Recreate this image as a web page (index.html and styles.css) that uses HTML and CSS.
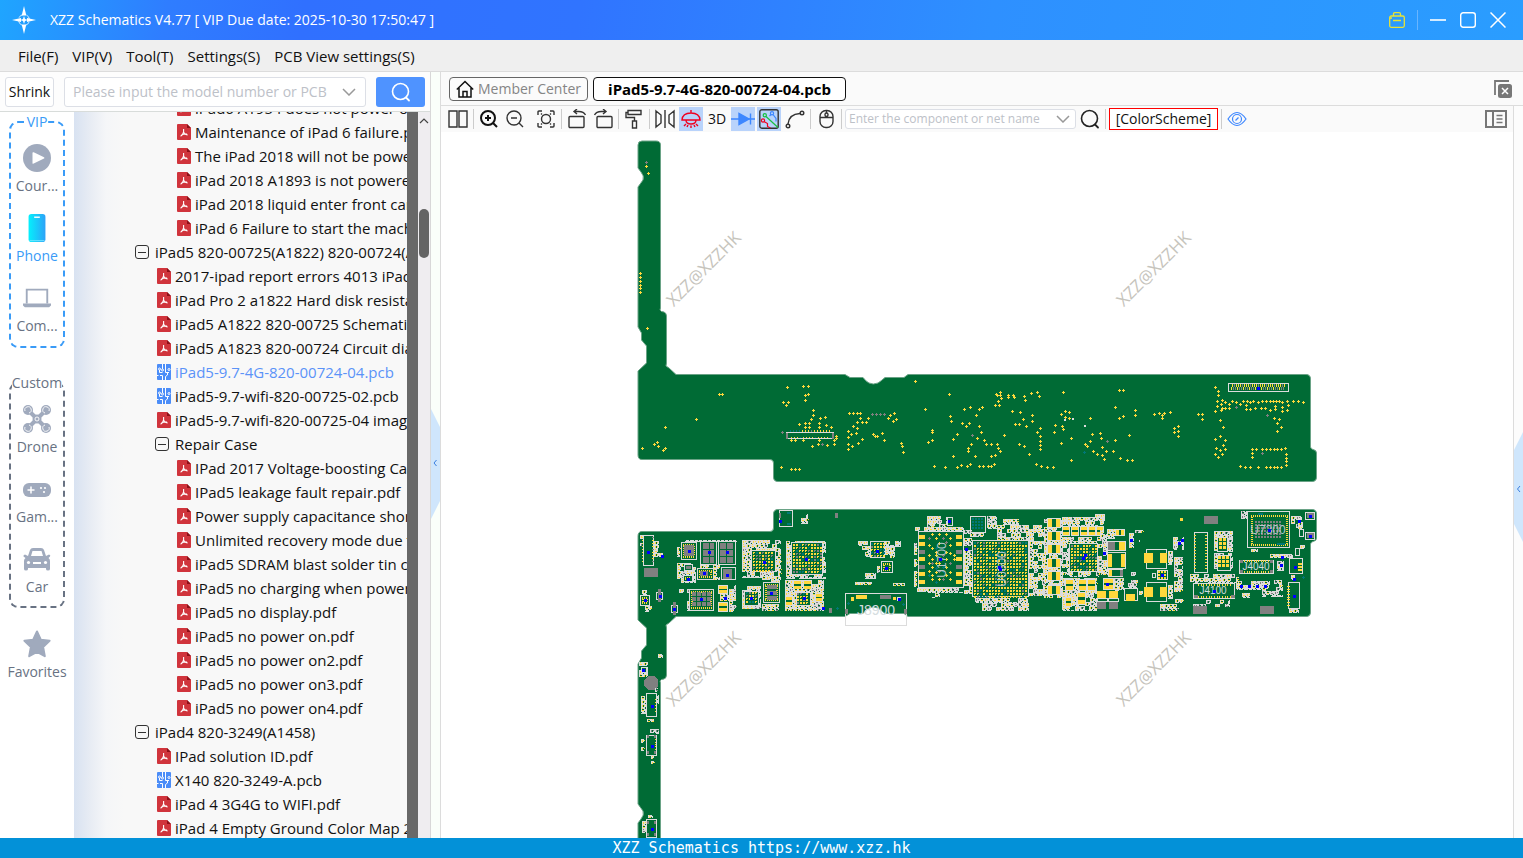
FILE: index.html
```html
<!DOCTYPE html>
<html lang="en">
<head>
<meta charset="utf-8">
<title>XZZ Schematics V4.77</title>
<link rel="stylesheet" href="styles.css">
</head>
<body>
<svg class="sprite" aria-hidden="true">
  <symbol id="pdf" viewBox="0 0 14 16"><path fill="#d0343c" d="M1 0h9l4 4v11a1 1 0 0 1-1 1H1a1 1 0 0 1-1-1V1a1 1 0 0 1 1-1z"/><path fill="#8d1018" d="M10 0l4 4h-4z"/><path d="M6.600 5v3c-.5 2-1.600 3.500-3 4.200M6.600 8.300c1 1.500 2.300 2.500 4 2.600M4.500 10.800c1.800-.8 3.600-1.100 5.500-.7" fill="none" stroke="#fff" stroke-width="1.100"/></symbol>
  <symbol id="pcb" viewBox="0 0 14 16"><rect width="14" height="16" rx="1" fill="#4b8df8"/><g fill="none" stroke="#fff"><path d="M5.500 0v5M8.500 0v8.500H12M2.500 6v2.500h3M5.500 16v-4.500H3M8.500 16v-3.500l2-1.500V9M0 11.500h1.500"/><circle cx="2.500" cy="5" r="1"/><circle cx="12" cy="5.500" r="1"/><circle cx="5.500" cy="6" r="1"/></g></symbol>
  <symbol id="chev" viewBox="0 0 14 8"><path d="M1 1l6 6 6-6" fill="none" stroke="currentColor" stroke-width="1.500"/></symbol>
  <symbol id="lens" viewBox="0 0 20 20"><circle cx="9.500" cy="9.500" r="8" fill="none" stroke="currentColor" stroke-width="1.600"/><path d="M15 15.500l3 3" stroke="currentColor" stroke-width="1.800" stroke-linecap="round"/></symbol>
</svg>

<header class="titlebar">
  <svg class="logo" viewBox="0 0 24 28"><g fill="#fff"><path d="M12 0l2.300 9.500h-4.600zM12 28l2.300-9.500h-4.600zM0 14l9-2v4zM24 14l-9-2v4z"/><path d="M12 10l1 3 3 1-3 1-1 3-1-3-3-1 3-1z"/></g><circle cx="12" cy="14" r="5.500" fill="none" stroke="#fff" stroke-width="1" stroke-dasharray="5 3.600" stroke-dashoffset="-2" opacity=".8"/></svg>
  <h1 class="title">XZZ Schematics V4.77 [ VIP Due date: 2025-10-30 17:50:47 ]</h1>
  <div class="window-buttons">
    <button class="win" aria-label="Toolbox"><svg viewBox="0 0 16 16" fill="none" stroke="#e8e337" stroke-width="1.300"><rect x=".7" y="4" width="14.600" height="11.300" rx="1.500"/><path d="M4.500 4V2q0-1.300 1.300-1.300h4.400q1.300 0 1.300 1.300v2M4 8.500h8M1 6h2"/></svg></button>
    <span class="win-sep"></span>
    <button class="win" aria-label="Minimize"><svg viewBox="0 0 16 16"><path d="M0 8h16" stroke="#fff" stroke-width="1.600"/></svg></button>
    <button class="win" aria-label="Maximize"><svg viewBox="0 0 16 16"><rect x=".7" y=".7" width="14.600" height="14.600" rx="2.500" fill="none" stroke="#fff" stroke-width="1.400"/></svg></button>
    <button class="win" aria-label="Close"><svg viewBox="0 0 16 16"><path d="M.5.5l15 15M15.500.5l-15 15" stroke="#fff" stroke-width="1.500"/></svg></button>
  </div>
</header>

<nav class="menubar">
  <button>File(F)</button><button>VIP(V)</button><button>Tool(T)</button><button>Settings(S)</button><button>PCB View settings(S)</button>
</nav>

<main class="workspace">
  <aside class="sidebar">
    <form class="search-row">
      <button type="button" class="shrink">Shrink</button>
      <div class="combo model"><input aria-label="Model search" placeholder="Please input the model number or PCB"><svg class="chev"><use href="#chev"/></svg></div>
      <button type="button" class="go" aria-label="Search"><svg><use href="#lens"/></svg></button>
    </form>
    <div class="side-body">
      <nav class="categories">
        <fieldset class="group vip"><legend>VIP</legend>
          <button class="cat"><svg viewBox="0 0 28 28"><circle cx="14" cy="14" r="14"/><path d="M9.500 9q0-1.200 1.200-.7l10.300 5q1 .7 0 1.300l-10.300 5q-1.200.5-1.200-.7z" fill="#fff"/></svg>Cour...</button>
          <button class="cat on"><svg viewBox="0 0 28 32"><defs><linearGradient id="ph"><stop offset="0" stop-color="#05f0fc"/><stop offset="1" stop-color="#2da2f8"/></linearGradient></defs><rect x="5" y="1" width="18" height="30" rx="3" fill="url(#ph)"/><path d="M11 4.500h6" stroke="#fff" stroke-width="1.500"/><path d="M6 29.500h16" stroke="#7ce5ff"/></svg>Phone</button>
          <button class="cat"><svg viewBox="0 0 30 28"><path fill="none" stroke="#a0aabd" stroke-width="2" d="M4 20V5h22v15"/><path d="M0 20h30v2l-2 2H2l-2-2z"/></svg>Com...</button>
        </fieldset>
        <fieldset class="group custom"><legend>Custom</legend>
          <button class="cat"><svg viewBox="0 0 28 28"><path stroke="#a0aabd" stroke-width="4" d="M5 5l18 18M23 5L5 23"/><circle cx="5" cy="5" r="5"/><circle cx="23" cy="5" r="5"/><circle cx="5" cy="23" r="5"/><circle cx="23" cy="23" r="5"/><circle cx="14" cy="14" r="4.500"/><g fill="none" stroke="#fff" stroke-width=".9"><path d="M2 6a3.200 3.200 0 1 1 4 2M26 6a3.200 3.200 0 1 0-4 2M2 22a3.200 3.200 0 1 0 4-2M26 22a3.200 3.200 0 1 1-4-2"/><circle cx="14" cy="14" r="2"/></g></svg>Drone</button>
          <button class="cat"><svg viewBox="0 0 28 28"><rect y="8" width="28" height="14" rx="6"/><path stroke="#fff" stroke-width="1.500" d="M8 11.500v7M4.500 15h7"/><circle cx="18" cy="13" r="1.100" fill="#fff"/><circle cx="22" cy="13" r="1.100" fill="#fff"/><circle cx="21" cy="17" r="1.100" fill="#fff"/></svg>Gam...</button>
          <button class="cat"><svg viewBox="0 0 28 28"><path d="M5 11l2-6q.7-2 3-2h8q2.300 0 3 2l2 6 3-1.500q2 .500 1 2L25.500 13q1.500 1 1.500 3v8q0 1.500-2 1.500t-2-1.500v-1H5v1q0 1.500-2 1.500T1 24v-8q0-2 1.500-3L.5 11.500q-.5-1.500 1.500-2zM8 11h12l-1.500-5H9.500z" fill-rule="evenodd"/><circle cx="5.500" cy="17.500" r="1.600" fill="#fff"/><circle cx="22.500" cy="17.500" r="1.600" fill="#fff"/><path d="M10 18h8" stroke="#fff" stroke-width="2"/></svg>Car</button>
        </fieldset>
        <button class="cat fav"><svg viewBox="0 0 28 28"><path stroke="#a0aabd" stroke-width="2" stroke-linejoin="round" d="M14 1.500l3.800 8.200 8.800 1-6.500 6.300 1.700 9.200L14 21.800l-7.800 4.400L7.900 17 1.400 10.700l8.800-1z"/></svg>Favorites</button>
      </nav>
      <div class="tree-wrap"><ul class="tree" id="tree"></ul></div>
      <div class="dark-rule"></div>
      <div class="scrollbar"><svg class="up" viewBox="0 0 10 6"><path d="M1 5l4-4 4 4" fill="none" stroke="#444" stroke-width="1.200"/></svg><span class="thumb"></span></div>
    </div>
  </aside>

  <div class="splitter"><svg class="handle" viewBox="0 0 9 110"><path d="M0 0l9 18v74l-9 18z"/><path class="arrow" d="M5.500 51L3 54l2.500 3"/></svg></div>

  <section class="viewer">
    <div class="tabs">
      <button class="tab home"><svg viewBox="0 0 18 18" fill="none" stroke="#111" stroke-width="1.500"><path d="M.8 9.500L9 1.500l8.200 8M3 8v9h12V8M7 17v-5.500h4V17"/></svg>Member Center</button>
      <button class="tab active">iPad5-9.7-4G-820-00724-04.pcb</button>
      <button class="close-all" aria-label="Close all tabs"><svg viewBox="0 0 18 18"><path d="M1 15V1h14" fill="none" stroke="#777" stroke-width="1.800"/><rect x="4" y="4" width="14" height="14" rx="2.500" fill="#777"/><path d="M8 8l6 6M14 8l-6 6" stroke="#fff" stroke-width="1.500"/></svg></button>
    </div>
    <div class="stage">
      <div class="column">
        <div class="toolbar">
          <button class="tool" aria-label="Split view"><svg viewBox="0 0 20 20"><path d="M1 2h8v16H1zM11 2h8v16h-8z"/></svg></button>
          <i class="sep"></i>
          <button class="tool" aria-label="Zoom in"><svg viewBox="0 0 20 20" class="bold"><circle cx="9" cy="9" r="7"/><path d="M14 14l4 4M9 6v6M6 9h6"/></svg></button>
          <button class="tool" aria-label="Zoom out"><svg viewBox="0 0 20 20"><circle cx="9" cy="9" r="7"/><path d="M14 14l4 4M6 9h6"/></svg></button>
          <button class="tool fit" aria-label="Fit"><svg viewBox="0 0 20 20"><circle cx="10" cy="10" r="4.500"/><path d="M2 6V3q0-1 1-1h3M14 2h3q1 0 1 1v3M18 14v3q0 1-1 1h-3M6 18H3q-1 0-1-1v-3M6 5.500l-1-1M14 5.500l1-1M6 14.500l-1 1M14 14.500l1 1"/></svg></button>
          <i class="sep"></i>
          <button class="tool" aria-label="Rotate left"><svg viewBox="0 0 20 20"><rect x="2" y="7.500" width="15" height="11" rx="1"/><path d="M18.500 6q-2-4-8-3.500H7M10 0L7 2.500 10 5"/></svg></button>
          <button class="tool" aria-label="Rotate right"><svg viewBox="0 0 20 20"><rect x="4" y="7.500" width="15" height="11" rx="1"/><path d="M1.500 6q2-4 8-3.500H13M10 0l3 2.500L10 5"/></svg></button>
          <i class="sep"></i>
          <button class="tool" aria-label="Paint"><svg viewBox="0 0 20 20"><path d="M4 1.500h13v4H4zM4 3.500H2v5h8.500V12M8.500 12h4v7h-4z"/></svg></button>
          <i class="sep"></i>
          <button class="tool" aria-label="Mirror"><svg viewBox="0 0 20 20"><path d="M1 2l5 4v8l-5 4zM19 2l-5 4v8l5 4zM10 1v18"/></svg></button>
          <button class="tool lit" aria-label="Lamp"><svg viewBox="0 0 20 20" class="red"><path d="M1 11q.5-7 9-7t9 7zM10 4V1M5 11q0 4 5 4t5-4M10 16.500V19M5 15l-2 2M15 15l2 2M7 16l-1 2M13 16l1 2"/></svg></button>
          <button class="tool text">3D</button>
          <button class="tool lit" aria-label="Diode"><svg viewBox="0 0 24 20" class="wide blue"><path d="M0 10h24M19.500 4.500v11"/><path d="M8 4.500v11l10-5.500z" fill="#3d87ff"/></svg></button>
          <button class="tool lit" aria-label="Traces"><svg viewBox="0 0 20 20"><rect x=".8" y=".8" width="18.400" height="18.400" rx="2"/><g stroke-width="1.200"><g stroke="#18c040"><path d="M7 7.500L19 18.500"/><circle cx="5.800" cy="6.200" r="1.600"/></g><g stroke="#3d87ff"><path d="M14 5.500l3 4v3M10.500 7l1.500-1.500"/><circle cx="13" cy="4.200" r="1.600"/></g><g stroke="#f00020"><path d="M5 12.500l3.500 2v3l3 1.500"/><circle cx="4" cy="11.500" r="1.600"/></g></g></svg></button>
          <button class="tool" aria-label="Curve"><svg viewBox="0 0 20 20"><path d="M3 15Q4 5 15 4.500"/><circle cx="3" cy="17" r="1.800"/><circle cx="17" cy="4" r="1.800"/></svg></button>
          <i class="sep"></i>
          <button class="tool" aria-label="Mouse"><svg viewBox="0 0 20 20"><rect x="4" y="1.500" width="13" height="17" rx="6"/><path d="M4 8.500h13M10.500 1.500V4M10.500 8.500V7"/><rect x="9" y="4" width="3" height="3.500" rx="1.500"/></svg></button>
          <i class="sep"></i>
          <div class="combo net"><input aria-label="Component search" placeholder="Enter the component or net name"><svg class="chev"><use href="#chev"/></svg></div>
          <button class="tool" aria-label="Find"><svg><use href="#lens"/></svg></button>
          <i class="sep"></i>
          <button class="scheme">[ColorScheme]</button>
          <i class="sep"></i>
          <button class="tool" aria-label="Visibility"><svg viewBox="0 0 20 20" class="blue thin"><path d="M1 10q9-13 18 0-9 13-18 0z"/><circle cx="10" cy="10" r="4.500"/><path d="M8.500 11.500l3-3"/></svg></button>
          <button class="layers" aria-label="Layer list"><svg viewBox="0 0 22 18" fill="none" stroke="#777" stroke-width="2"><path d="M1 1h20v16H1zM8 1v16"/><path stroke-width="1.400" d="M11.500 5.500h6M11.500 9h6M11.500 12.500h6"/></svg></button>
        </div>
        <svg class="board" id="board" viewBox="441 132 1072 706" role="img" aria-label="Circuit board, both sides">
          <defs><path id="outline" d="M638 145q0-4 4-4h14q4.500 0 4.500 4v163l-.5 2q1 2 4 2q2.500 1 2.500 4v47l-.5 3 3 2 7 6.500h169l5 3h13q3 4 6 5.500 4 2 9 0 3-2 7-5.500h19l4-3h398q4.500 0 4.500 4.500v68q.5 2 2.500 2.500 3.500.5 3.500 3.500v24q0 4.500-4.500 4.500H778q-4.500 0-4.500-4.500v-14q0-3.500-3.500-3.500H642q-4 0-4-4.500v-84l8.500-8v-17l-2.500-3-2.500-3v-7l-3.500-6V187l5-7q1.500-4-2-8l-3-4z"/></defs>
          <g class="fr4"><use href="#outline"/><use href="#outline" transform="matrix(1 0 0 -1 0 991)"/></g>
          <g id="parts" shape-rendering="crispEdges"></g>
          <g class="refs">
            <text x="876" y="615" class="big">J8900</text>
            <text x="1268" y="534" class="mid">U7300</text>
            <text x="1256" y="570">J4040</text>
            <text x="1213" y="594">J4100</text>
            <text transform="translate(946 560) rotate(-90)" class="mid">U1700</text>
            <text transform="translate(1006 569) rotate(-90)" class="mid">U0600</text>
          </g>
          <g id="origins" shape-rendering="crispEdges"></g>
          <g class="mark">
            <text transform="translate(708 273) rotate(-45)">XZZ@XZZHK</text>
            <text transform="translate(1158 273) rotate(-45)">XZZ@XZZHK</text>
            <text transform="translate(708 673) rotate(-45)">XZZ@XZZHK</text>
            <text transform="translate(1158 673) rotate(-45)">XZZ@XZZHK</text>
          </g>
        </svg>
      </div>
      <div class="right-strip"><svg class="handle" viewBox="0 0 9 110"><path d="M9 0L0 18v74l9 18z"/><path class="arrow" d="M6 54l-2.500 3L6 60"/></svg></div>
    </div>
  </section>
</main>
<footer class="status">XZZ Schematics https://www.xzz.hk</footer>
<script src="app.js"></script>
</body>
</html>
```
FILE: styles.css
```css
* { box-sizing: border-box; }
body { margin: 0; height: 100vh; display: flex; flex-direction: column; overflow: hidden; font: 15px/24px "Open Sans", "Noto Sans", sans-serif; color: #111; background: #fff; }
button, input { font: inherit; color: inherit; margin: 0; padding: 0; border: 0; background: none; }
svg { display: block; }
.sprite { position: absolute; width: 0; height: 0; }

.titlebar { flex: none; height: 40px; display: flex; align-items: center; padding: 0 17px 0 12px; gap: 14px; background: linear-gradient(100deg, #1fa5ff 0, #2f7dff 11%, #3070ff 20%, #3074ff 38%, #2e90ff 65%, #2a9dff 100%); color: #fff; }
.logo { width: 24px; height: 28px; }
.title { margin: 0; font-size: 14px; font-weight: 400; flex: 1; }
.window-buttons { display: flex; align-items: center; gap: 14px; }
.win { width: 16px; height: 16px; }
.win svg { width: 16px; height: 16px; }
.win-sep { width: 1px; height: 20px; margin: 0 -2px; background: #69b5ff; }

.menubar { flex: none; height: 32px; display: flex; align-items: center; gap: 14px; padding: 0 18px; background: #efefef; border-bottom: 1px solid #dcdcdc; }

.workspace { flex: 1; min-height: 0; display: flex; }
.sidebar { flex: none; width: 431px; display: flex; flex-direction: column; border-right: 1px solid #d8d8d8; }
.search-row { flex: none; height: 40px; display: flex; align-items: center; padding: 0 5px; border-bottom: 1px solid #d8dcda; background: #fdfdfd; }
.shrink { width: 49px; height: 30px; border: 1px solid #dcdfe6; border-radius: 3px; background: #fff; font-size: 14px; }
.combo { display: flex; align-items: center; border: 1px solid #dcdfe6; border-radius: 3px; background: #fff; color: #999; }
.combo input { flex: 1; min-width: 0; outline: 0; color: #333; }
.combo input::placeholder { color: #bdc1c8; opacity: 1; }
.chev { flex: none; width: 14px; height: 8px; }
.model { flex: 1; height: 30px; margin: 0 10px; padding: 0 9px 0 8px; font-size: 14px; }
.go { width: 49px; height: 30px; display: grid; place-items: center; border-radius: 3px; background: #4f93ff; color: #fff; }
.go svg { width: 20px; height: 20px; }
.side-body { flex: 1; min-height: 0; display: flex; }

.categories { flex: none; width: 74px; padding: 0 9px; display: flex; flex-direction: column; align-items: center; background: #fff; font-size: 14px; line-height: 20px; color: #687283; }
.group { width: 100%; min-width: 0; margin: 0; padding: 10px 0 7px; border: 2px dashed #3a9bf7; border-radius: 9px; }
.group legend { height: 20px; margin: 0 auto; padding: 0; color: #3a9bf7; }
.custom { margin-top: 25px; padding-bottom: 6px; border-color: #687283; }
.custom legend { color: #687283; }
.cat { width: 100%; height: 70px; display: flex; flex-direction: column; align-items: center; gap: 2px; white-space: nowrap; }
.cat svg { flex: none; width: 30px; height: 32px; padding: 1px; fill: #a0aabd; overflow: visible; }
.cat.on { color: #3a9bf7; }
.fav { margin-top: 20px; }
.vip .cat:last-child, .custom .cat:last-child { height: 57px; }

.tree-wrap { flex: 1; min-width: 0; overflow: hidden; background: linear-gradient(90deg, #d8e2f1 0, #e9edf4 18px, #f5f6f8 32px, #f8f8f8 50px); }
.tree { list-style: none; margin: -16px 0 0; padding: 0; }
.row { height: 24px; display: flex; align-items: center; white-space: nowrap; }
.row button { display: flex; align-items: center; gap: 4px; }
.row svg { flex: none; width: 14px; height: 16px; }
.l1 { padding-left: 61px; }
.l2 { padding-left: 83px; }
.l3 { padding-left: 103px; }
.folder.l2 { padding-left: 81px; }
.box { width: 14px; height: 14px; margin-right: 2px; border: 1px solid #333; border-radius: 3px; display: grid; place-items: center; }
.box::after { content: ""; width: 8px; height: 1px; background: #333; }
.row .current { color: #5b93f8; }
.dark-rule { flex: none; width: 11px; background: #686868; }
.scrollbar { flex: none; width: 12px; padding: 6px 1px; background: #efedf0; }
.up { width: 10px; height: 6px; }
.thumb { display: block; height: 49px; margin-top: 85px; border-radius: 5px; background: #646464; }

.splitter { flex: none; width: 10px; display: flex; align-items: center; background: #fafffa; border-right: 1px solid #dcdcdc; }
.splitter .handle { margin-top: 18px; }
.handle { width: 9px; height: 110px; fill: #cfe6fc; }
.handle .arrow { fill: none; stroke: #3a7fe0; stroke-width: 1; }

.viewer { flex: 1; min-width: 0; display: flex; flex-direction: column; background: #fff; }
.tabs { flex: none; height: 34px; display: flex; align-items: center; gap: 5px; padding: 0 11px 0 8px; background: #fafafa; border-bottom: 1px solid #dcdcdc; }
.tab { height: 24px; border: 1px solid #666; border-radius: 4px; background: #fbfbfb; display: flex; align-items: center; justify-content: center; line-height: 20px; }
.home { width: 139px; gap: 4px; color: #858585; font-size: 14px; }
.home svg { width: 18px; height: 18px; }
.active { width: 253px; border-color: #111; background: #fff; color: #000; font-weight: 700; }
.close-all { margin-left: auto; }
.close-all svg { width: 18px; height: 18px; }
.stage { flex: 1; min-height: 0; display: flex; }
.column { flex: 1; min-width: 0; display: flex; flex-direction: column; }
.right-strip { flex: none; width: 10px; display: flex; align-items: center; border-left: 1px solid #dcdcdc; background: #fcfcfc; }
.right-strip .handle { margin-top: 30px; }

.toolbar { flex: none; height: 26px; display: flex; align-items: center; gap: 2px; padding: 0 6px 0 5px; background: #fafafa; }
.tool { flex: none; width: 24px; height: 24px; display: grid; place-items: center; }
.tool svg { width: 20px; height: 20px; fill: none; stroke: #333; stroke-width: 1.4; color: #222; }
.tool svg.bold { stroke: #111; stroke-width: 2; }
.tool svg.wide { width: 24px; }
.tool svg.red { stroke: #f00020; }
.tool svg.blue { stroke: #3d87ff; }
.tool svg.thin { stroke-width: 1.2; }
.fit { width: 29px; padding-left: 4px; }
.lit { background: #b9d3fb; }
.text { font-size: 14px; }
.sep { flex: none; width: 1px; height: 20px; margin: 0 1px; background: #ccc; }
.net { flex: none; width: 231px; height: 20px; padding: 0 5px 0 3px; font-size: 12px; line-height: 18px; }
.scheme { flex: none; width: 109px; height: 22px; border: 1px solid #f00; background: #fff; font-size: 14px; line-height: 20px; }
.layers { margin-left: auto; }
.layers svg { width: 22px; height: 18px; }

.board { flex: 1; min-height: 0; width: 100%; }
.fr4 { fill: #006b35; stroke: #6aa386; stroke-width: 1; }
.refs text { font: 10px "Liberation Sans", sans-serif; fill: #d5dde0; text-anchor: middle; }
.refs .mid { font-size: 12px; fill: #b9c9cc; }
.refs .big { font-size: 14px; }
.mark text { font: 17px "Open Sans", sans-serif; fill: #c6c4bc; text-anchor: middle; }

.status { flex: none; height: 20px; background: #0391d8; color: #fff; font: 15px/20px "DejaVu Sans Mono", monospace; text-align: center; }
```
FILE: app.js
```js
// ---- document tree: [level, kind, label]
const docs = [
  [3, "pdf", "iPad6 A1954 does not power on.pdf"],
  [3, "pdf", "Maintenance of iPad 6 failure.pdf"],
  [3, "pdf", "The iPad 2018 will not be powered on.pdf"],
  [3, "pdf", "iPad 2018 A1893 is not powered on.pdf"],
  [3, "pdf", "iPad 2018 liquid enter front camera.pdf"],
  [3, "pdf", "iPad 6 Failure to start the machine.pdf"],
  [1, "dir", "iPad5 820-00725(A1822) 820-00724(A1823)"],
  [2, "pdf", "2017-ipad report errors 4013 iPad-5.pdf"],
  [2, "pdf", "iPad Pro 2 a1822 Hard disk resistance.pdf"],
  [2, "pdf", "iPad5 A1822 820-00725 Schematic.pdf"],
  [2, "pdf", "iPad5 A1823 820-00724 Circuit diagram.pdf"],
  [2, "pcb", "iPad5-9.7-4G-820-00724-04.pcb", true],
  [2, "pcb", "iPad5-9.7-wifi-820-00725-02.pcb"],
  [2, "pdf", "iPad5-9.7-wifi-820-00725-04 image.pdf"],
  [2, "dir", "Repair Case"],
  [3, "pdf", "IPad 2017 Voltage-boosting Capacitor.pdf"],
  [3, "pdf", "IPad5 leakage fault repair.pdf"],
  [3, "pdf", "Power supply capacitance short.pdf"],
  [3, "pdf", "Unlimited recovery mode due to.pdf"],
  [3, "pdf", "iPad5 SDRAM blast solder tin case.pdf"],
  [3, "pdf", "iPad5 no charging when power off.pdf"],
  [3, "pdf", "iPad5 no display.pdf"],
  [3, "pdf", "iPad5 no power on.pdf"],
  [3, "pdf", "iPad5 no power on2.pdf"],
  [3, "pdf", "iPad5 no power on3.pdf"],
  [3, "pdf", "iPad5 no power on4.pdf"],
  [1, "dir", "iPad4 820-3249(A1458)"],
  [2, "pdf", "IPad solution ID.pdf"],
  [2, "pcb", "X140 820-3249-A.pcb"],
  [2, "pdf", "iPad 4 3G4G to WIFI.pdf"],
  [2, "pdf", "iPad 4 Empty Ground Color Map 2.pdf"]
];
document.getElementById("tree").innerHTML = docs.map(([lvl, kind, label, cur]) => {
  const icon = kind === "dir" ? '<span class="box"></span>' : `<svg><use href="#${kind}"/></svg>`;
  return `<li class="row l${lvl} ${kind === "dir" ? "folder" : ""}"><button class="${cur ? "current" : ""}">${icon}${label}</button></li>`;
}).join("");

// ---- board artwork, coordinates in thirds of a unit from a sheet origin
const Y = "#ffd83c", G = "#808080", W = "#dcdcdc", T = "#007878", B = "#0000ff", F = "#006b35";
let out = [], ox = 0, oy = 0, seed = 7;
const origins = [];
const sheet = (x, y) => { ox = x; oy = y; };
const px = v => Math.round(ox + v / 3), py = v => Math.round(oy + v / 3), sz = v => Math.max(1, Math.round(v / 3));
const rnd = () => (seed = (seed * 1103515245 + 12345) % 2147483648) / 2147483648;
const fillPath = (c, d) => out.push(`<path fill="${c}" d="${d}"/>`);
const cell = (x, y, w, h) => `M${x} ${y}h${w}v${h}h${-w}z`;
const rect = (c, x, y, w, h) => fillPath(c, cell(px(x), py(y), sz(w), sz(h)));
const box = (x, y, w, h) => out.push(`<rect x="${px(x) + .5}" y="${py(y) + .5}" width="${sz(w) - 1}" height="${sz(h) - 1}" fill="${F}" stroke="${W}"/>`);
const points = list => list.trim().split(/\s+/).map(p => p.split(",").map(Number));
const plus = (c, list) => {
  let d = "";
  for (const [a, b] of points(list)) { const x = px(a), y = py(b); d += cell(x - 1, y, 3, 1) + cell(x, y - 1, 1, 3); }
  fillPath(c, d);
};
// part origins, kept above the reference names
const origin = list => {
  let d = "";
  for (const [a, b] of points(list)) d += cell(px(a) - 1, py(b) - 1, 3, 3);
  origins.push(`<path fill="${B}" d="${d}"/>`);
};
// pads on a fixed pitch inside an area
const grid = (c, x, y, w, h, step = 3, s = 2) => {
  let d = "";
  for (let j = py(y); j + s <= py(y) + sz(h); j += step) for (let i = px(x); i + s <= px(x) + sz(w); i += step) d += cell(i, j, s, s);
  fillPath(c, d);
};
// ball array: supply, ground and test balls mixed
const balls = (x, y, w, h) => {
  let a = "", g = "", t = "";
  for (let j = py(y); j + 2 <= py(y) + sz(h); j += 3) for (let i = px(x); i + 2 <= px(x) + sz(w); i += 3) {
    const r = rnd(), d = rnd() < .5 ? cell(i, j, 2, 2) : cell(i, j, 2, 1) + cell(i, j + 1, 1, 1);
    if (r < .7) a += d; else if (r < .86) g += d; else t += d;
  }
  fillPath(Y, a); fillPath(G, g); fillPath(T, t);
};
// pads round the inner edge of a package
const ring = (c, x, y, w, h) => {
  const X = px(x) + 2, Yy = py(y) + 2, Wd = sz(w) - 4, H = sz(h) - 4; let d = "";
  for (let i = 0; i < Wd; i += 2) d += cell(X + i, Yy, 1, 2) + cell(X + i, Yy + H - 2, 1, 2);
  for (let i = 2; i < H - 2; i += 2) d += cell(X, Yy + i, 2, 1) + cell(X + Wd - 2, Yy + i, 2, 1);
  fillPath(c, d);
};
// dense field of small two-pad parts
const cloud = (x, y, w, h, keep = .86) => {
  let body = "", pads = "", dark = "", hole = "";
  const X = px(x), Yy = py(y), X2 = X + sz(w), Y2 = Yy + sz(h);
  for (let j = Yy; j < Y2; j += 4) for (let i = X; i < X2; ) {
    const tall = rnd() < .5, cw = Math.min(tall ? 4 : 5, X2 - i), ch = Math.min(4, Y2 - j);
    if (rnd() < keep) {
      body += cell(i, j, cw, ch);
      const t = rnd() < .75;
      if (cw > 2 && ch > 2) {
        const a = tall ? cell(i + 1, j, 1, 1) + cell(i + 1, j + 2, 2, 1) : cell(i + 1, j + 1, 1, 2) + cell(i + 3, j + 1, 1, 1);
        if (t) pads += a; else dark += a;
        if (rnd() < .75) hole += cell(i + cw - 1, j + ch - 1, 1, 1);
        if (rnd() < .5) hole += tall ? cell(i + 1, j + 1, 2, 1) : cell(i + 2, j + 1, 1, 2);
      } else hole += cell(i, j, 1, 1);
    }
    i += cw;
  }
  fillPath(W, body); fillPath(Y, pads); fillPath(G, dark); fillPath(F, hole);
};
const pair = (x, y, w, h) => { box(x - 3, y - 3, w + 6, h + 6); rect(Y, x, y, w * .35, h); rect(Y, x + w * .65, y, w * .35, h); };
const block = (x, y, w, h) => { box(x, y, w, h); rect(Y, x + 3, y + 3, w - 6, h * .3); rect(Y, x + 3, y + h * .6, w - 6, h * .3); };

// top side
sheet(630, 135);
plus(Y, `49,94 55,115 31,415 31,427 31,437 31,449 31,460 31,472 52,580 267,778 275,778 199,853 106,877 82,922 73,928 85,934 106,940 100,946 37,940 472,757 520,754 535,754 535,778 526,781 526,796 460,802 475,802 469,811 550,826 550,841 544,853 571,850 586,847 526,865 538,865 568,865 508,868 589,871 526,877 538,877 568,877 604,877 619,904 619,910 484,916 496,916 520,916 568,916 613,916 547,934 565,928 592,931 613,928 454,997 484,1003 496,1003 508,1003 658,835 670,835 682,835 691,835 691,850 715,850 682,862 697,862 709,862 670,874 682,880 655,889 664,898 679,895 655,907 697,913 655,928 667,934 685,925 655,943 730,898 736,904 742,904 757,895 763,916 781,841 793,835 775,850 799,853 790,859 814,925 817,934 820,952 856,739 886,823 958,778 961,844 964,859 907,886 907,892 907,916 895,922 970,913 982,898 970,964 913,994 946,997 982,997`);
plus(G, "49,82 457,892 727,838 739,838 751,838 763,838 577,928");
for (let i = 0; i < 14; i++) rect(i < 4 ? T : i === 7 ? G : Y, 480 + i * 9, 885, 4, 6);
box(469, 891, 145, 20);
for (let i = 0; i < 14; i++) rect(i % 5 === 3 ? T : Y, 484 + i * 9, 905, 4, 4);
rect(G, 469, 893, 6, 18); rect(G, 606, 893, 6, 18);
sheet(960, 365);
plus(Y, `109,86 121,82 112,91 121,91 124,100 115,109 106,121 118,121 145,91 145,97 160,91 163,97 193,94 196,106 214,85 232,82 238,94 310,82 478,76 490,76 13,133 31,127 58,133 67,127 49,151 157,139 181,142 190,163 217,151 217,169 166,178 178,178 199,184 7,175 19,184 28,175 58,184 64,202 52,220 73,226 79,238 94,238 112,238 115,250 121,259 106,271 94,274 133,211 34,238 25,250 25,259 46,274 4,301 22,304 31,298 58,304 70,304 85,304 94,304 103,298 232,202 241,190 241,214 241,229 241,241 241,253 178,238 193,244 208,268 229,298 244,304 262,307 280,307 286,181 283,202 304,235 334,220 334,286 307,184 310,193 316,139 328,142 304,148 316,157 328,160 391,160 466,127 478,160 490,154 526,136 526,151 583,148 598,145 607,151 613,145 607,160 631,142 655,184 643,190 643,202 655,199 655,214 715,148 727,148 727,163 397,208 421,205 424,220 391,229 376,238 382,244 400,259 412,268 427,247 439,259 427,271 433,283 460,259 466,226 508,211 481,280 502,286 517,286 766,67 775,79 775,91 772,109 787,106 784,118 796,112 772,124 787,130 796,130 808,130 766,139 784,136 808,118 817,109 829,112 841,118 850,109 862,109 871,112 880,109 895,112 907,109 919,109 931,109 940,109 949,109 958,109 967,112 982,109 1000,109 1015,109 1030,112 859,121 859,133 871,133 886,130 904,130 916,130 931,136 946,124 946,133 967,127 967,139 985,121 982,136 943,160 958,163 952,175 964,187 952,199 781,166 790,187 781,214 766,223 796,226 790,241 769,250 781,256 796,253 766,268 787,268 775,277 877,253 889,253 907,253 919,253 931,253 943,253 952,253 964,253 976,250 877,265 877,277 979,268 979,280 979,289 979,301 841,304 856,307 871,307 895,307 919,307 931,307 943,307 952,307 964,307`);
plus(G, "37,211 442,229 829,127 922,151 907,265"); plus(T, "373,262");
rect(W, 336, 158, 6, 6); rect(W, 372, 180, 6, 6); rect(W, 312, 162, 6, 6);
box(805, 54, 182, 27);
for (let i = 0; i < 27; i++) { rect(i % 4 === 1 ? G : Y, 815 + i * 6, 57, 3, 9); rect(i % 3 ? G : Y, 812 + i * 6, 67, 3, 9); }
origin("895,68");
sheet(630, 135);
plus(Y, "1003,823 1021,817 997,865 1009,874 1018,865 1039,841 1048,823 1042,910 1024,928 1015,940 1015,949 1036,964 994,991 1012,994 1021,988");

// bottom side, left third
sheet(630, 500);
cloud(30, 106, 12, 32); cloud(72, 124, 28, 48); box(40, 106, 32, 94);
for (let i = 0; i < 9; i++) { rect(Y, 36, 112 + i * 9, 4, 4); rect(i % 4 ? Y : G, 66, 112 + i * 9, 5, 4); }
rect(G, 42, 204, 42, 27);
cloud(142, 128, 10, 42); cloud(165, 120, 155, 6); box(153, 126, 48, 54); ring(Y, 153, 126, 48, 54); rect(G, 162, 135, 30, 33);
box(210, 122, 50, 72); for (let j = 0; j < 3; j++) { rect(G, 218, 128 + j * 22, 18, 18); rect(G, 239, 128 + j * 22, 12, 18); }
box(264, 122, 54, 72); for (let j = 0; j < 3; j++) { rect(G, 270, 128 + j * 22, 18, 18); rect(G, 291, 128 + j * 22, 18, 18); }
cloud(142, 188, 58, 60); box(163, 192, 27, 20); rect(G, 168, 197, 14, 9); box(160, 225, 30, 22); ring(Y, 160, 225, 30, 22);
box(200, 205, 50, 35); ring(Y, 200, 205, 50, 35); rect(G, 210, 213, 24, 15); cloud(250, 194, 22, 46);
box(272, 202, 46, 40); rect(G, 279, 206, 26, 30); cloud(210, 196, 40, 9);
cloud(148, 268, 14, 24); cloud(170, 266, 8, 66); box(176, 266, 74, 66); ring(Y, 176, 266, 74, 66); grid(G, 186, 276, 56, 50, 5, 4);
block(264, 254, 30, 28); block(264, 306, 30, 30); cloud(270, 282, 28, 22); cloud(298, 256, 22, 80);
cloud(335, 120, 116, 114); box(364, 150, 74, 66); balls(369, 155, 66, 60);
cloud(335, 258, 56, 70); box(342, 272, 46, 44); balls(347, 277, 40, 38); cloud(395, 228, 56, 20, .6);
box(400, 246, 50, 64); ring(Y, 400, 246, 50, 64); for (let j = 0; j < 3; j++) { rect(G, 410, 256 + j * 16, 14, 13); rect(G, 426, 256 + j * 16, 14, 13); } cloud(396, 312, 52, 20);
cloud(468, 124, 120, 114); box(484, 125, 96, 98); balls(490, 131, 88, 90);
cloud(466, 240, 118, 92); block(490, 240, 26, 28); block(520, 240, 26, 28); box(497, 275, 46, 42); balls(502, 280, 40, 36); block(466, 288, 24, 30); block(555, 278, 24, 26); rect(G, 597, 324, 8, 14);
cloud(683, 123, 40, 16); cloud(695, 139, 24, 18); cloud(706, 157, 14, 16); cloud(765, 123, 48, 18); cloud(765, 141, 30, 32);
box(720, 124, 46, 52); balls(724, 129, 42, 46); cloud(742, 186, 10, 34); box(752, 184, 36, 36); ring(Y, 752, 184, 36, 36);
cloud(706, 220, 34, 18); cloud(676, 246, 50, 10); cloud(790, 248, 36, 8);
box(446, 30, 42, 52); rect(T, 470, 36, 12, 6); rect(T, 470, 68, 12, 6); rect(G, 446, 40, 6, 16); cloud(513, 42, 20, 30); rect(G, 615, 40, 9, 15);
box(31, 285, 30, 32); ring(Y, 31, 285, 30, 32); cloud(36, 270, 14, 14); cloud(44, 318, 20, 18);
box(79, 276, 22, 24); rect(G, 84, 267, 10, 38); box(122, 316, 22, 24); rect(G, 128, 307, 9, 40);
out.push('<path d="M845.500 593.500h61v32h-61z" fill="none" stroke="#dcdcdc"/>');
rect(Y, 678, 286, 34, 11); rect(G, 750, 286, 34, 11); rect(Y, 663, 292, 10, 11); box(802, 290, 13, 13); rect(Y, 790, 292, 8, 10);
rect(G, 645, 328, 8, 14); rect(G, 822, 328, 8, 14); plus(T, "655,310 622,325 820,312");
origin("55,155 97,169 178,152 236,157 290,157 223,220 175,236 292,224 214,298 284,295 403,185 364,293 424,280 529,176 523,295 580,325 742,152 769,203 451,64 46,301 91,287 133,328 808,296");

// bottom side, centre
sheet(900, 500);
cloud(82, 48, 60, 32); box(142, 50, 18, 28); cloud(46, 80, 148, 12); cloud(42, 128, 9, 134, .8); box(55, 92, 138, 171);
for (const [i, y] of [105, 126, 150, 171, 195, 217, 240].entries()) { const c = i === 2 || i === 4 ? G : Y; rect(c, 58, y, 17, 12); rect(c, 168, y, 17, 12); }
plus(Y, "97,103 118,103 139,103 107,115 151,115 88,136 118,130 151,136 107,157 97,145 139,155 88,166 107,166 151,160 163,166 97,178 139,178 88,190 107,190 163,178 97,202 139,202 118,190 88,214 107,217 151,217 97,226 139,226 118,238 151,238 97,238");
plus(G, "88,115 139,126 97,190 151,190 130,166 128,115 118,214 130,238"); plus(T, "107,145 130,145 107,205 130,202 88,226 107,247 130,214");
cloud(52, 264, 140, 14); cloud(92, 280, 28, 14, .6);
box(211, 48, 48, 50); grid(T, 217, 54, 38, 40, 3, 2); cloud(211, 98, 50, 12); cloud(262, 48, 30, 40); cloud(292, 75, 95, 46); cloud(310, 58, 48, 18); cloud(192, 90, 24, 202);
box(216, 121, 171, 172); balls(221, 126, 165, 168);
cloud(225, 294, 160, 14); cloud(245, 308, 140, 25); cloud(387, 75, 50, 214, .8);
cloud(433, 58, 56, 236);
for (const y of [58, 96, 135, 178, 217, 257]) pair(444, y, 36, 25);
cloud(487, 50, 130, 30); cloud(585, 42, 30, 14); for (const x of [487, 513, 540, 563, 587]) block(x, 78, 25, 30);
cloud(487, 112, 135, 20); cloud(487, 132, 22, 92); cloud(594, 132, 30, 92); cloud(507, 216, 90, 16); box(508, 130, 87, 86); balls(512, 135, 82, 80);
cloud(487, 234, 104, 100); for (const x of [496, 533, 562]) block(x, 236, 26, 36); block(608, 234, 32, 36); block(532, 276, 26, 38); block(496, 290, 22, 30);
for (const x of [592, 627]) { rect(Y, x, 272, 28, 22); rect(G, x, 306, 28, 22); box(x - 2, 294, 32, 11); }
origin("148,64 121,178 199,148 298,200 301,208 556,166 550,175 613,160 622,253");

// bottom side, right third
sheet(1100, 500);
box(22, 122, 56, 30); rect(G, 24, 126, 20, 23); rect(Y, 58, 126, 18, 23); box(22, 157, 56, 52); rect(Y, 24, 162, 13, 40); rect(Y, 64, 162, 13, 40);
cloud(0, 90, 22, 32); cloud(22, 88, 24, 30); pair(48, 90, 24, 15); cloud(88, 100, 15, 46); cloud(105, 90, 25, 10); cloud(105, 118, 14, 10); box(25, 208, 46, 24); rect(Y, 28, 211, 10, 18); rect(G, 60, 211, 10, 18); cloud(92, 215, 22, 36, .7);
cloud(42, 233, 30, 38); box(72, 264, 41, 40); rect(Y, 78, 282, 28, 22); cloud(84, 248, 28, 14);
for (const y of [146, 247]) { box(138, y, 62, 60); rect(Y, 131, y + 14, 26, 30); rect(Y, 181, y + 14, 20, 30); cloud(116, y + 26, 14, 20, .7); cloud(204, y + 8, 14, 42); }
cloud(221, 172, 27, 106); box(156, 220, 12, 16); box(170, 209, 32, 30); grid(Y, 174, 214, 28, 24, 3, 2); cloud(180, 312, 56, 22); cloud(224, 296, 24, 12);
rect(G, 312, 48, 42, 24); rect(Y, 240, 54, 8, 8); cloud(218, 112, 33, 40, .7);
box(281, 97, 43, 122); for (let i = 0; i < 12; i++) { rect(Y, 283, 106 + i * 9, 5, 4); rect(Y, 316, 106 + i * 9, 5, 4); }
cloud(341, 94, 57, 62); cloud(341, 158, 57, 54, .7); box(352, 110, 34, 45); grid(Y, 356, 115, 30, 40, 4, 3); box(350, 164, 42, 47); grid(Y, 355, 169, 36, 42, 4, 3);
cloud(422, 33, 18, 25); box(442, 34, 130, 112); ring(Y, 446, 38, 122, 104); grid(G, 464, 64, 84, 54, 3, 2); rect(T, 475, 40, 14, 6); rect(T, 532, 130, 24, 6); cloud(453, 148, 22, 9);
cloud(574, 35, 34, 48, .6); cloud(594, 66, 26, 22, .5);
for (const y of [36, 97]) { box(616, y, 30, 24); rect(G, 620, y + 3, 22, 16); } box(597, 88, 14, 24); box(584, 145, 14, 24); cloud(600, 134, 16, 16, .5);
box(417, 179, 106, 42); for (let i = 0; i < 11; i++) { rect(Y, 433 + i * 7, 179, 4, 5); rect(Y, 433 + i * 7, 214, 4, 5); } rect(G, 419, 181, 9, 9); rect(G, 511, 181, 9, 9); rect(G, 419, 211, 9, 8); rect(G, 511, 211, 9, 8);
cloud(510, 162, 70, 12); cloud(530, 182, 22, 30); box(566, 175, 42, 49); for (let i = 0; i < 3; i++) rect(Y, 594, 190 + i * 8, 12, 5);
cloud(572, 224, 14, 14); box(564, 247, 37, 80); for (let i = 0; i < 8; i++) rect(Y, 562, 258 + i * 8, 10, 4); cloud(568, 328, 30, 12);
cloud(270, 222, 142, 28); box(280, 248, 127, 48); for (let i = 0; i < 13; i++) { rect(Y, 294 + i * 8, 251, 4, 6); rect(Y, 294 + i * 8, 287, 4, 6); } rect(G, 282, 286, 12, 9); rect(G, 393, 286, 12, 9);
cloud(407, 232, 10, 38); cloud(415, 244, 95, 26); cloud(485, 262, 62, 30); cloud(522, 240, 25, 24); cloud(425, 280, 24, 15);
cloud(280, 300, 110, 22, .6); rect(G, 279, 318, 42, 24); rect(G, 480, 318, 42, 24); plus(T, "610,232");
origin("94,119 187,226 238,130 247,121 508,89 631,47 631,109 598,64 547,170 544,196 586,200 583,236 583,287 343,273 424,259 448,259 472,259 496,259");

// bottom side, lower arm
sheet(560, 620);
cloud(295, 103, 16, 13); cloud(238, 125, 28, 45, .7); box(243, 140, 17, 17);
out.push('<path fill="#808080" d="M648 676h6l4 4v6l-4 4h-6l-4-4v-6z"/>');
cloud(242, 228, 16, 55); cloud(286, 205, 10, 12); cloud(290, 226, 7, 26); box(258, 220, 33, 73); cloud(262, 298, 22, 9); cloud(270, 328, 26, 14);
box(258, 344, 33, 63); cloud(244, 357, 10, 12); cloud(244, 380, 10, 12); cloud(272, 408, 9, 10); cloud(272, 424, 9, 9);
cloud(265, 586, 16, 9); cloud(247, 604, 11, 36); box(258, 598, 33, 56);
for (const y of [346, 394, 602, 640]) { rect(G, 260, y, 6, 8); rect(G, 283, y, 7, 8); }
for (let i = 0; i < 5; i++) { rect(Y, 286, 238 + i * 9, 4, 4); rect(Y, 286, 358 + i * 7, 4, 3); }
origin("250,149 275,257 275,377 275,626");
document.getElementById("parts").innerHTML = out.join("");
document.getElementById("origins").innerHTML = origins.join("");
```
